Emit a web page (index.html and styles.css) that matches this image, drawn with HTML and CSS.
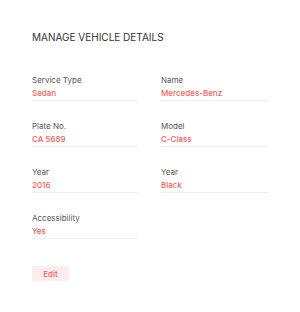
FILE: index.html
```html
<!DOCTYPE html>
<html lang="en">
<head>
    <meta charset="UTF-8">
    <meta name="viewport" content="width=device-width, initial-scale=1.0">
    <title>Manage Vehicle Details</title>
    <link rel="stylesheet" href="styles.css">
</head>
<body>
    <div class="container">
        <h1>Manage Vehicle Details</h1>
        <div class="details">
            <div class="field">
                <label>Service Type</label>
                <p>Sedan</p>
            </div>
            <div class="field">
                <label>Name</label>
                <p>Mercedes-Benz</p>
            </div>
            <div class="field">
                <label>Plate No.</label>
                <p>CA 5689</p>
            </div>
            <div class="field">
                <label>Model</label>
                <p>C-Class</p>
            </div>
            <div class="field">
                <label>Year</label>
                <p>2016</p>
            </div>
            <div class="field">
                <label>Year</label>
                <p>Black</p>
            </div>
            <div class="field">
                <label>Accessibility</label>
                <p>Yes</p>
            </div>
        </div>
        <button>Edit</button>
    </div>
</body>
</html>
```

FILE: styles.css
```css
body {
    font-family: 'Inter', 'Liberation Sans', sans-serif;
    margin: 0;
    background-color: #fff;
}
.container {
    padding: 30px 32px;
}
.container h1 {
    font-size: 10px;
    line-height: 14px;
    font-weight: 400;
    text-transform: uppercase;
    color: #333;
    margin: 0 0 30px;
}
.details {
    display: grid;
    grid-template-columns: 107px 107px;
    column-gap: 22px;
    row-gap: 19px;
}
.field label {
    display: block;
    font-size: 8px;
    line-height: 12px;
    color: #555;
}
.field p {
    margin: 2px 0 0;
    padding-bottom: 2px;
    font-size: 8px;
    line-height: 10px;
    font-weight: 500;
    color: #f25c5c;
    border-bottom: 1px solid #eee;
}
button {
    margin-top: 27px;
    width: 37px;
    height: 15px;
    padding: 0;
    font-family: inherit;
    font-size: 8px;
    font-weight: 500;
    color: #f25c5c;
    background-color: #fdeded;
    border: none;
    border-radius: 2px;
    cursor: pointer;
}
```
